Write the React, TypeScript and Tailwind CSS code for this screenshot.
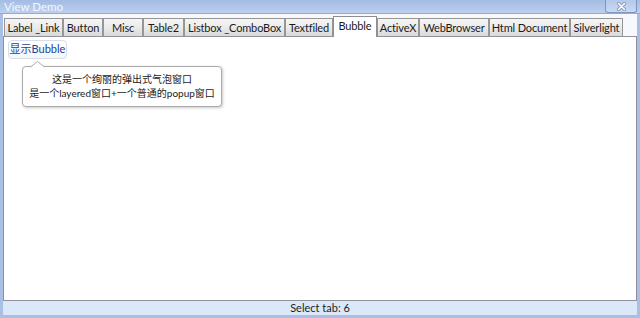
import React from "react";

const tabs: { label: string; w: number; selected?: boolean }[] = [
  { label: "Label _Link", w: 59 },
  { label: "Button", w: 40 },
  { label: "Misc", w: 40 },
  { label: "Table2", w: 41 },
  { label: "Listbox _ComboBox", w: 101 },
  { label: "Textfiled", w: 48 },
  { label: "Bubble", w: 44, selected: true },
  { label: "ActiveX", w: 42 },
  { label: "WebBrowser", w: 70 },
  { label: "Html Document", w: 81 },
  { label: "Silverlight", w: 53 },
];

export default function App() {
  return (
    <div
      className="w-[640px] h-[318px] flex flex-col bg-[#a9c0e4] overflow-hidden text-[#1b1b1b]"
      style={{ fontFamily: "Lato, 'Noto Sans CJK SC', sans-serif" }}
    >
      {/* Title bar */}
      <div className="h-[14px] flex items-start justify-between bg-gradient-to-b from-[#a4bce3] to-[#bcd0ee] border-b border-[#93acd4]">
        <span className="pl-[4px] text-[11.5px] leading-[13px] text-[#f3f7fd]">View Demo</span>
        <div className="mr-[3px] w-[32px] h-[13px] border border-t-0 border-[#7d96bf] rounded-b-[3px] bg-gradient-to-b from-[#b3c8ea] to-[#c9daf3] flex items-center justify-center">
          <svg width="11" height="9" viewBox="0 0 11 9">
            <path d="M2.5 1.5 L8.5 7.5 M8.5 1.5 L2.5 7.5" stroke="#8a9ab4" strokeWidth="3.2" strokeLinecap="round" />
            <path d="M2.5 1.5 L8.5 7.5 M8.5 1.5 L2.5 7.5" stroke="#ffffff" strokeWidth="1.5" strokeLinecap="round" />
          </svg>
        </div>
      </div>

      {/* Body */}
      <div className="flex-1 flex flex-col mx-[3px] bg-[#f6f8fc]">
        <div className="pt-[2px] h-[22px] flex items-end pl-[1px]">
          {tabs.map((t) =>
            t.selected ? (
              <div
                key={t.label}
                className="relative z-10 -mb-px h-[21px] bg-white border border-b-0 border-[#8c8e94] flex items-start pt-[2px] justify-center text-[11px] leading-[14px] tracking-[-0.15px]"
                style={{ width: t.w }}
              >
                {t.label}
              </div>
            ) : (
              <div
                key={t.label}
                className="h-[18px] bg-gradient-to-b from-[#f5f5f5] via-[#ebebeb] to-[#d9d9d9] border border-b-0 border-[#969696] flex items-center justify-center text-[11px] leading-[14px] tracking-[-0.15px] whitespace-nowrap"
                style={{ width: t.w }}
              >
                {t.label}
              </div>
            )
          )}
        </div>

        {/* Pane */}
        <div className="relative h-[265px] bg-white border border-[#8f9298] pl-[4px] pt-[3px]">
          <div className="w-[59px] h-[19px] rounded-[4px] border border-[#d7dee9] bg-gradient-to-b from-white to-[#f4f6fa] flex items-center justify-center text-[11px] text-[#1d3f96] whitespace-nowrap">
            显示Bubble
          </div>

          {/* Popup bubble */}
          <div className="absolute left-[18px] top-[29px] w-[200px] h-[41px] bg-white border border-[#ababab] rounded-[4px] shadow-[1px_1px_3px_rgba(0,0,0,0.22)] pt-[5px] text-center text-[10px] leading-[14px] text-[#222]">
            <div>这是一个绚丽的弹出式气泡窗口</div>
            <div>是一个layered窗口+一个普通的popup窗口</div>
          </div>
          <svg className="absolute left-[26px] top-[24px]" width="15" height="7" viewBox="0 0 15 7">
            <path d="M0 6.5 L7.5 0.5 L15 6.5 Z" fill="#ffffff" />
            <path d="M0.5 6 L7.5 0.5 L14.5 6" fill="none" stroke="#ababab" strokeWidth="1" />
          </svg>
        </div>

        {/* Status bar */}
        <div className="h-[14px] bg-[#dae8fa] flex items-center justify-center text-[11px] leading-[14px] text-[#1e1e1e]">
          Select tab: 6
        </div>
      </div>
      <div className="h-[3px]" />
    </div>
  );
}
